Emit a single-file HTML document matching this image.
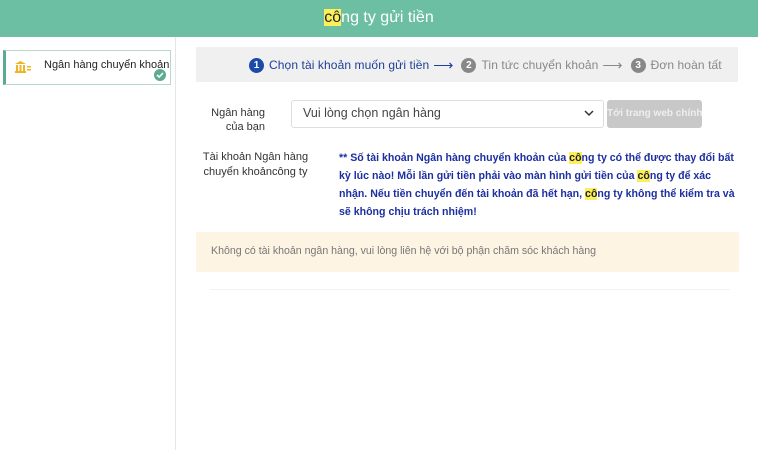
<!DOCTYPE html>
<html><head><meta charset="utf-8"><style>
body{margin:0;width:758px;height:450px;background:#fff;font-family:"Liberation Sans",Arial,sans-serif;position:relative;overflow:hidden}
.a{position:absolute}
.hl{background:#fcf05a;color:#222}
</style></head><body>
<div class="a" style="left:0;top:0;width:758px;height:37px;background:#6cbfa3"></div>
<div class="a" style="left:0;top:6px;width:758px;text-align:center;color:#fff;font-size:16px;line-height:24px"><span class="hl">cô</span>ng ty gửi tiền</div>
<div class="a" style="left:175px;top:37px;width:1px;height:413px;background:#e6e6e6"></div>
<div class="a" style="left:3px;top:50px;border:1px solid #b8d8cf;border-left:3px solid #5aab8f;box-sizing:border-box;width:168px;height:35px"></div>
<svg class="a" style="left:14px;top:60px" width="18" height="14" viewBox="0 0 18 14"><path d="M1 4 L6.5 1 L12 4 Z" fill="#f0b322"/><rect x="2" y="5" width="2" height="6" fill="#f0b322"/><rect x="5.5" y="5" width="2" height="6" fill="#f0b322"/><rect x="9" y="5" width="2" height="6" fill="#f0b322"/><rect x="1" y="11" width="11" height="2" fill="#f0b322"/><rect x="13" y="6" width="4" height="1.5" fill="#f0b322"/><rect x="13" y="9" width="4" height="1.5" fill="#f0b322"/></svg>
<div class="a" style="left:44px;top:59px;font-size:11px;color:#222">Ngân hàng chuyển khoản</div>
<svg class="a" style="left:154px;top:69px" width="12" height="12" viewBox="0 0 12 12"><circle cx="6" cy="6" r="6" fill="#5aab8f"/><path d="M3 6 L5.2 8 L9 4" stroke="#fff" stroke-width="1.6" fill="none"/></svg>
<div class="a" style="left:196px;top:47px;width:542px;height:35px;background:#f0f0f0"></div>
<div class="a" style="left:249px;top:57px;font-size:12px;letter-spacing:0.1px;line-height:16px;color:#888;white-space:nowrap;display:flex;align-items:center">
<span style="display:inline-block;width:15px;height:15px;border-radius:50%;background:#1c4aa8;color:#fff;font-size:10px;text-align:center;line-height:15px;font-weight:bold;margin-right:5px;letter-spacing:0">1</span><span style="color:#1c3f9a">Chọn tài khoản muốn gửi tiền</span><span style="color:#1c3f9a;margin:0 8px 0 4px;font-size:14px">⟶</span>
<span style="display:inline-block;width:15px;height:15px;border-radius:50%;background:#888;color:#fff;font-size:10px;text-align:center;line-height:15px;font-weight:bold;margin-right:5px;letter-spacing:0">2</span><span>Tin tức chuyển khoản</span><span style="margin:0 8px 0 4px;font-size:14px">⟶</span>
<span style="display:inline-block;width:15px;height:15px;border-radius:50%;background:#888;color:#fff;font-size:10px;text-align:center;line-height:15px;font-weight:bold;margin-right:5px;letter-spacing:0">3</span><span>Đơn hoàn tất</span></div>
<div class="a" style="left:200px;top:106px;width:65px;text-align:right;font-size:11px;line-height:14px;color:#333">Ngân hàng<br>của bạn</div>
<div class="a" style="left:291px;top:100px;width:313px;height:28px;border:1px solid #ddd;border-radius:3px;box-sizing:border-box"></div>
<div class="a" style="left:303px;top:106px;font-size:12.5px;color:#444">Vui lòng chọn ngân hàng</div>
<svg class="a" style="left:584px;top:110px" width="10" height="7" viewBox="0 0 10 7"><path d="M1 1 L5 5 L9 1" stroke="#333" stroke-width="1.5" fill="none"/></svg>
<div class="a" style="left:607px;top:100px;width:95px;height:28px;background:#c8c8c8;border-radius:3px;color:#eee;font-size:10px;font-weight:bold;line-height:28px;text-align:center;overflow:hidden;white-space:nowrap">Tới trang web chính</div>
<div class="a" style="left:198px;top:150px;width:115px;text-align:center;font-size:11px;line-height:15px;color:#333">Tài khoản Ngân hàng<br>chuyển khoảncông ty</div>
<div class="a" style="left:339px;top:149px;width:402px;font-size:10.6px;line-height:18px;font-weight:bold;color:#1c2fa0">** Số tài khoản Ngân hàng chuyển khoản của <span class="hl">cô</span>ng ty có thể được thay đổi bất kỳ lúc nào! Mỗi lần gửi tiền phải vào màn hình gửi tiền của <span class="hl">cô</span>ng ty để xác nhận. Nếu tiền chuyển đến tài khoản đã hết hạn, <span class="hl">cô</span>ng ty không thể kiểm tra và sẽ không chịu trách nhiệm!</div>
<div class="a" style="left:196px;top:232px;width:543px;height:40px;background:#fdf4e3;border-radius:2px"></div>
<div class="a" style="left:211px;top:245px;font-size:10.6px;color:#777">Không có tài khoản ngân hàng, vui lòng liên hệ với bộ phận chăm sóc khách hàng</div>
<div class="a" style="left:210px;top:289px;width:520px;height:1px;background:#f2f2f2"></div>
</body></html>
